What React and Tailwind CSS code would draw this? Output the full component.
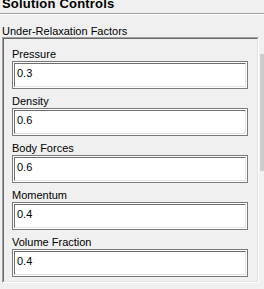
import React from 'react';

const factors = [
  { label: 'Pressure', value: '0.3' },
  { label: 'Density', value: '0.6' },
  { label: 'Body Forces', value: '0.6' },
  { label: 'Momentum', value: '0.4' },
  { label: 'Volume Fraction', value: '0.4' },
];

function Field({ label, value }) {
  return (
    <div className="flex flex-col">
      <label className="h-[13px] text-[11px] leading-[13px] text-black">{label}</label>
      {/* classic inset text box */}
      <div className="w-[236px] h-[28px] border border-[#7a7a7a] bg-white p-px">
        <div className="h-full border-t border-l border-[#6e6e6e] border-r-[#e3e3e3] border-b-[#e3e3e3] border-r border-b bg-white pl-[2px] pt-[3px]">
          <span className="block text-[11px] leading-[13px] text-black">{value}</span>
        </div>
      </div>
    </div>
  );
}

export default function App() {
  return (
    <div
      className="w-[264px] h-[289px] overflow-hidden bg-[#f0f0f0] flex flex-col"
      style={{ fontFamily: '"Liberation Sans", Arial, sans-serif' }}
    >
      <div className="h-[13px] overflow-hidden">
        <p className="-mt-[3px] pl-[2px] text-[13px] leading-[13px] font-bold tracking-[0.2px] text-black">Solution Controls</p>
      </div>
      <div className="h-px bg-[#a0a0a0]" />
      <div className="h-px bg-white" />

      <div className="flex">
        <div className="w-[260px] flex flex-col">
          <p className="h-[22px] pt-[10px] pl-[2px] text-[11px] leading-[13px] text-black">Under-Relaxation Factors</p>
          <div className="ml-[2px] w-[257px] h-[246px] border-t border-l border-[#a0a0a0] border-r border-b border-r-white border-b-white">
            <div className="h-full border-t border-l border-[#696969] border-r border-b border-r-[#e3e3e3] border-b-[#e3e3e3] pl-[8px] pt-[9px] flex flex-col gap-[6px]">
              {factors.map((f) => (
                <Field key={f.label} label={f.label} value={f.value} />
              ))}
            </div>
          </div>
        </div>
        {/* cut-off scrollbar */}
        <div className="w-[4px] pt-[39px]">
          <div className="h-[117px] bg-[#cdcdcd]" />
        </div>
      </div>
    </div>
  );
}
